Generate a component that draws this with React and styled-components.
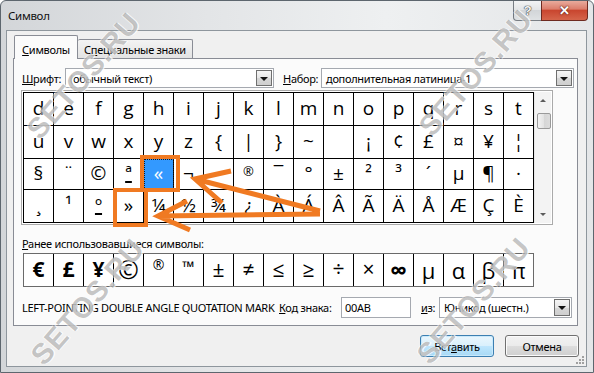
import React from 'react';
import styled, { createGlobalStyle } from 'styled-components';

const GlobalStyle = createGlobalStyle`
  html, body { margin: 0; padding: 0; background: #ffffff; }
  body {
    font-family: "Noto Sans", "Open Sans", sans-serif;
    font-size: 11px;
    letter-spacing: -0.3px;
    color: #000;
    overflow: hidden;
  }
  * { box-sizing: border-box; }
`;

const Window = styled.div`
  position: relative;
  width: 594px;
  height: 373px;
  border: 1px solid #5d666e;
  border-radius: 6px 6px 0 0;
  background: linear-gradient(90deg, #d3d6d9 0%, #e3e5e7 35%, #eef0f1 65%, #e4e6e8 100%);
  display: flex;
  flex-direction: column;
  overflow: hidden;
`;

const TitleBar = styled.div`
  height: 29px;
  flex: none;
  display: flex;
  align-items: flex-start;
`;

const Title = styled.div`
  padding-left: 7px;
  line-height: 29px;
  font-size: 11.5px;
  color: #111;
`;

const Controls = styled.div`
  margin-left: auto;
  margin-right: 5px;
  margin-top: -1px;
  display: flex;
`;

const HelpBtn = styled.div`
  width: 28px;
  height: 21px;
  border: 1px solid rgba(70, 78, 86, 0.7);
  border-top: none;
  border-right: none;
  border-radius: 0 0 0 4px;
  background: linear-gradient(#f4f5f6 0%, #e2e4e6 50%, #d2d5d8 51%, #dfe2e4 100%);
  display: flex;
  align-items: center;
  justify-content: center;
  font: bold 13px "Liberation Sans", sans-serif;
  color: #f4f4f4;
  text-shadow: 0 0 1px #444, 0 0 1px #444, 0 0 1px #444;
`;

const CloseBtn = styled.div`
  width: 47px;
  height: 21px;
  border: 1px solid #6e2a20;
  border-top: none;
  border-radius: 0 0 4px 0;
  background: linear-gradient(#eab0a2 0%, #dc7e6c 45%, #c9462f 52%, #d5654b 100%);
  display: flex;
  align-items: center;
  justify-content: center;
  font: bold 13px "Liberation Sans", sans-serif;
  color: #fff;
  text-shadow: 0 0 2px #5a1a10, 0 0 1px #5a1a10;
`;

const Client = styled.div`
  position: relative;
  flex: 1;
  margin: 0 6px 5px 5px;
  background: #f0f0f0;
  border: 1px solid #8e969d;
  display: flex;
  flex-direction: column;
`;

const TabStrip = styled.div`
  margin-top: 4px;
  padding-left: 7px;
  height: 23px;
  display: flex;
  align-items: flex-end;
`;

const Tab = styled.div`
  position: relative;
  z-index: 1;
  height: ${p => (p.$active ? 24 : 19)}px;
  width: ${p => p.$w}px;
  margin-bottom: ${p => (p.$active ? -1 : 0)}px;
  border: 1px solid #898c95;
  border-bottom: none;
  border-left: ${p => (p.$active ? '1px solid #898c95' : 'none')};
  border-radius: 2px 2px 0 0;
  background: ${p => (p.$active ? '#fbfbfb' : 'linear-gradient(#f3f3f3, #e3e3e3)')};
  display: flex;
  align-items: center;
  justify-content: center;
  padding-top: ${p => (p.$active ? 3 : 1)}px;
  white-space: nowrap;
  color: #000;
`;

const Panel = styled.div`
  margin: 0 8px 0 6px;
  height: 268px;
  flex: none;
  border: 1px solid #898c95;
  background: #fbfbfb;
  padding: 9px 0 0 8px;
  display: flex;
  flex-direction: column;
  align-items: flex-start;
`;

const Row = styled.div`
  display: flex;
  align-items: center;
  height: ${p => p.$h || 20}px;
  margin-top: ${p => p.$mt || 0}px;
`;

const Label = styled.div`
  width: ${p => p.$w}px;
  margin-left: ${p => p.$ml || 0}px;
  flex: none;
  white-space: nowrap;
`;

const U = styled.span`
  text-decoration: underline;
  text-underline-offset: 1px;
`;

const Combo = styled.div`
  width: ${p => p.$w}px;
  height: ${p => p.$h || 20}px;
  flex: none;
  border: 1px solid #a5a9b0;
  background: #fff;
  display: flex;
  align-items: center;
  padding: 1px;
`;

const ComboText = styled.div`
  flex: 1;
  padding-left: 3px;
  white-space: nowrap;
  overflow: hidden;
`;

const DropBtn = styled.div`
  width: 16px;
  align-self: stretch;
  border: 1px solid #6f6f6f;
  background: linear-gradient(#f5f5f5 0%, #e6e6e6 50%, #d6d6d6 51%, #cfcfcf 100%);
  display: flex;
  align-items: center;
  justify-content: center;
`;

const DownTri = styled.div`
  width: 0;
  height: 0;
  border-left: 4px solid transparent;
  border-right: 4px solid transparent;
  border-top: 4px solid #111;
  margin-top: 1px;
`;

const GridBox = styled.div`
  margin-top: 2px;
  margin-left: -1px;
  border: 1px solid #aaaaaa;
  padding: 1px;
  display: flex;
  background: #fff;
`;

const CharGrid = styled.div`
  display: grid;
  grid-template-columns: repeat(17, 30px);
  grid-template-rows: 33px 33px 31px 33px;
  border-top: 1px solid #000;
  border-left: 1px solid #000;
  background: #fff;
`;

const Cell = styled.div`
  border-right: 1px solid #000;
  border-bottom: 1px solid #000;
  display: flex;
  align-items: center;
  justify-content: center;
  font-family: "Open Sans", "Noto Sans", sans-serif;
  font-size: ${p => p.$fs || 19}px;
  letter-spacing: 0;
  line-height: 1;
  color: ${p => (p.$sel ? '#fff' : '#000')};
  background: ${p => (p.$sel ? '#3399ff' : 'transparent')};
  outline: ${p => (p.$sel ? '1px dotted #1a1a1a' : 'none')};
  outline-offset: -1px;
  padding-bottom: ${p => p.$pb || 1}px;
  text-decoration: ${p => (p.$ul ? 'underline' : 'none')};
  text-decoration-thickness: 2px;
  text-underline-offset: 1px;
`;

const Scrollbar = styled.div`
  width: 17px;
  height: 131px;
  background: #f3f3f3;
  border-left: 1px solid #e6e6e6;
  display: flex;
  flex-direction: column;
`;

const ScrollArrow = styled.div`
  height: 17px;
  flex: none;
  display: flex;
  align-items: center;
  justify-content: center;
`;

const UpTri = styled.div`
  width: 0;
  height: 0;
  border-left: 3px solid transparent;
  border-right: 3px solid transparent;
  border-bottom: 3px solid #5c5c5c;
`;

const SmallDownTri = styled.div`
  width: 0;
  height: 0;
  border-left: 3px solid transparent;
  border-right: 3px solid transparent;
  border-top: 3px solid #5c5c5c;
`;

const Track = styled.div`
  flex: 1;
`;

const Thumb = styled.div`
  width: 14px;
  height: 16px;
  margin: 4px 0 0 2px;
  border: 1px solid #9a9a9a;
  border-radius: 2px;
  background: linear-gradient(90deg, #f3f3f3, #e2e2e2 50%, #d6d6d6 51%, #dcdcdc);
`;

const RecentRow = styled.div`
  margin-top: 2px;
  margin-left: 1px;
  display: grid;
  grid-template-columns: repeat(16, 30px) 29px;
  height: 34px;
  border: 1px solid #6a6a6a;
  background: #fff;
`;

const RecentCell = styled.div`
  border-right: ${p => (p.$last ? 'none' : '1px solid #000')};
  display: flex;
  align-items: center;
  justify-content: center;
  font-family: "Open Sans", "Noto Sans", sans-serif;
  font-size: ${p => p.$fs || 21}px;
  font-weight: ${p => (p.$b ? 700 : 400)};
  letter-spacing: 0;
  line-height: 1;
  padding-bottom: ${p => p.$pb || 1}px;
`;

const NameText = styled.div`
  width: 257px;
  flex: none;
  white-space: nowrap;
`;

const TextInput = styled.div`
  width: 70px;
  height: 21px;
  flex: none;
  border: 1px solid #a5a9b0;
  background: #fff;
  padding-left: 3px;
  display: flex;
  align-items: center;
`;

const Footer = styled.div`
  margin-top: 9px;
  padding-right: 7px;
  display: flex;
  justify-content: flex-end;
  gap: 11px;
`;

const Button = styled.div`
  width: 74px;
  height: 22px;
  border: 1px solid ${p => (p.$default ? '#3c7fb1' : '#707070')};
  border-radius: 3px;
  background: ${p =>
    p.$default
      ? 'linear-gradient(#eaf6fd 0%, #d9f0fc 50%, #bee6fd 51%, #a7d9f5 100%)'
      : 'linear-gradient(#f2f2f2 0%, #ebebeb 50%, #dddddd 51%, #cfcfcf 100%)'};
  box-shadow: ${p => (p.$default ? 'inset 0 0 0 1px #c9e9fb' : 'inset 0 0 0 1px #fbfbfb')};
  display: flex;
  align-items: center;
  justify-content: center;
`;

const Grip = styled.svg`
  position: absolute;
  right: 1px;
  bottom: 1px;
`;

const Overlay = styled.svg`
  position: absolute;
  left: -1px;
  top: -1px;
  pointer-events: none;
  z-index: 4;
`;

const Watermark = styled.span`
  position: absolute;
  left: ${p => p.$x}px;
  top: ${p => p.$y}px;
  transform: translate(-50%, -50%) rotate(-49deg);
  font: bold 29px "Liberation Sans", Arial, sans-serif;
  letter-spacing: 1px;
  color: rgba(105, 105, 105, 0.38);
  text-shadow: 1px 1px 0 rgba(255, 255, 255, 0.8), -1px -1px 0 rgba(255, 255, 255, 0.5);
  white-space: nowrap;
  pointer-events: none;
  z-index: 5;
`;

const rows = [
  'defghijklmnopqrst'.split(''),
  ['u', 'v', 'w', 'x', 'y', 'z', '{', '|', '}', '~', '', '¡', '¢', '£', '¤', '¥', '¦'],
  ['§', '¨', '©', 'ª', '«', '¬', '', '®', '¯', '°', '±', '²', '³', '´', 'µ', '¶', '·'],
  ['¸', '¹', 'º', '»', '¼', '½', '¾', '¿', 'À', 'Á', 'Â', 'Ã', 'Ä', 'Å', 'Æ', 'Ç', 'È'],
];

const special = {
  '®': { fs: 13, pb: 6 },
  'ª': { ul: true },
  'º': { ul: true },
};

const recent = [
  { c: '€', b: true },
  { c: '£', b: true },
  { c: '¥', b: true },
  { c: '©', fs: 25 },
  { c: '®', fs: 14, pb: 10 },
  { c: '™', fs: 16, pb: 6, b: true },
  { c: '±' },
  { c: '≠' },
  { c: '≤' },
  { c: '≥' },
  { c: '÷' },
  { c: '×' },
  { c: '∞', b: true, fs: 24 },
  { c: 'μ', fs: 22 },
  { c: 'α', fs: 22 },
  { c: 'β', fs: 22 },
  { c: 'π', fs: 22 },
];

export default function App() {
  return (
    <>
      <GlobalStyle />
      <Window>
        <TitleBar>
          <Title>Символ</Title>
          <Controls>
            <HelpBtn>?</HelpBtn>
            <CloseBtn>✕</CloseBtn>
          </Controls>
        </TitleBar>
        <Client>
          <TabStrip>
            <Tab $active $w={64}>
              <span><U>С</U>имволы</span>
            </Tab>
            <Tab $w={115}>
              <span>С<U>п</U>ециальные знаки</span>
            </Tab>
          </TabStrip>
          <Panel>
            <Row>
              <Label $w={43}><U>Ш</U>рифт:</Label>
              <Combo $w={209}>
                <ComboText>(обычный текст)</ComboText>
                <DropBtn><DownTri /></DropBtn>
              </Combo>
              <Label $w={38} $ml={9}><U>Н</U>абор:</Label>
              <Combo $w={253}>
                <ComboText>дополнительная латиница-1</ComboText>
                <DropBtn><DownTri /></DropBtn>
              </Combo>
            </Row>
            <GridBox>
              <CharGrid>
                {rows.map((r, ri) =>
                  r.map((c, ci) => {
                    const s = special[c] || {};
                    return (
                      <Cell
                        key={`${ri}-${ci}`}
                        $sel={ri === 2 && ci === 4}
                        $fs={s.fs}
                        $pb={s.pb}
                        $ul={s.ul}
                      >
                        {c}
                      </Cell>
                    );
                  })
                )}
              </CharGrid>
              <Scrollbar>
                <ScrollArrow><UpTri /></ScrollArrow>
                <Track><Thumb /></Track>
                <ScrollArrow><SmallDownTri /></ScrollArrow>
              </Scrollbar>
            </GridBox>
            <Row $h={16} $mt={10}>
              <Label $w={300}><U>Р</U>анее использовавшиеся символы:</Label>
            </Row>
            <RecentRow>
              {recent.map((r, i) => (
                <RecentCell key={i} $b={r.b} $fs={r.fs} $pb={r.pb} $last={i === recent.length - 1}>
                  {r.c}
                </RecentCell>
              ))}
            </RecentRow>
            <Row $h={21} $mt={10}>
              <NameText>LEFT-POINTING DOUBLE ANGLE QUOTATION MARK</NameText>
              <Label $w={62}><U>К</U>од знака:</Label>
              <TextInput>00AB</TextInput>
              <Label $w={18} $ml={10}><U>и</U>з:</Label>
              <Combo $w={133} $h={21}>
                <ComboText>Юникод (шестн.)</ComboText>
                <DropBtn><DownTri /></DropBtn>
              </Combo>
            </Row>
          </Panel>
          <Footer>
            <Button $default>Вст<U>а</U>вить</Button>
            <Button>Отмена</Button>
          </Footer>
          <Grip width="10" height="10" viewBox="0 0 10 10">
            <g fill="#a0a0a0">
              <rect x="7" y="1" width="2" height="2" />
              <rect x="4" y="4" width="2" height="2" />
              <rect x="7" y="4" width="2" height="2" />
              <rect x="1" y="7" width="2" height="2" />
              <rect x="4" y="7" width="2" height="2" />
              <rect x="7" y="7" width="2" height="2" />
            </g>
          </Grip>
        </Client>

        <Overlay width="594" height="373" viewBox="0 0 594 373">
          <g fill="none" stroke="#f07a22" strokeWidth="4">
            <rect x="142" y="157" width="36" height="33" />
            <rect x="115" y="190" width="31" height="35" />
          </g>
          <g fill="none" stroke="#f07a22" strokeWidth="5" strokeLinejoin="miter" strokeLinecap="butt">
            <path d="M320 211 L195 179 M231 171 L195 179 L222 203" />
            <path d="M320 214 L158 216 M187 201 L158 216 L190 230" />
          </g>
        </Overlay>

        <Watermark $x={83} $y={75}>SETOS.RU</Watermark>
        <Watermark $x={87} $y={301}>SETOS.RU</Watermark>
        <Watermark $x={475} $y={72}>SETOS.RU</Watermark>
        <Watermark $x={473} $y={300}>SETOS.RU</Watermark>
      </Window>
    </>
  );
}
